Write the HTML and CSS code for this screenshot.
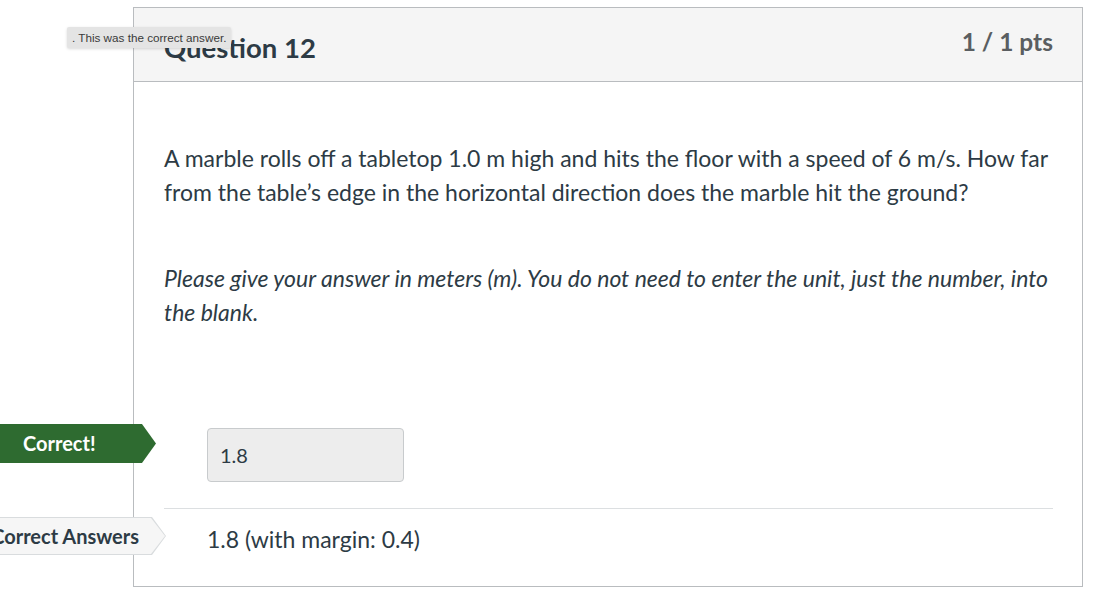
FILE: index.html
```html
<!DOCTYPE html>
<html>
<head>
<meta charset="utf-8">
<link rel="stylesheet" href="styles.css">
</head>
<body>
<div class="page">
  <div class="card">
    <div class="card-header">
      <h2 class="title">Question 12</h2>
      <span class="pts">1 / 1 pts</span>
    </div>
    <div class="card-body">
      <p class="text">A marble rolls off a tabletop 1.0 m high and hits the floor with a speed of 6 m/s. How far from the table’s edge in the horizontal direction does the marble hit the ground?</p>
      <p class="text note"><em>Please give your answer in meters (m). You do not need to enter the unit, just the number, into the blank.</em></p>
      <div class="answer-row answer-user">
        <span class="label label-correct">Correct!</span>
        <div class="answer-box">1.8</div>
      </div>
      <div class="answer-row answer-key">
        <span class="label label-key"><span class="label-text">Correct Answers</span></span>
        <div class="answer-text">1.8 (with margin: 0.4)</div>
      </div>
    </div>
  </div>
  <div class="tooltip">. This was the correct answer.</div>
</div>
</body>
</html>
```

FILE: styles.css
```css
html, body {
  margin: 0;
  padding: 0;
  background: #ffffff;
}

.page {
  position: relative;
  padding: 7px 10px 0 133px;
  font-family: Lato, "Open Sans", sans-serif;
  color: #2d3b45;
}

.card {
  border: 1px solid #b9bcbf;
  background: #ffffff;
}

.card-header {
  height: 73px;
  background: #f5f5f5;
  border-bottom: 1px solid #b9bcbf;
  display: flex;
  justify-content: space-between;
  align-items: flex-start;
  padding: 0 29px 0 30px;
}

.title {
  margin: 23px 0 0 0;
  font-size: 27.5px;
  font-weight: 700;
  line-height: 34px;
  color: #2d3b45;
}

.pts {
  margin-top: 17px;
  font-size: 24.5px;
  font-weight: 700;
  line-height: 34px;
  color: #5a5e61;
}

.card-body {
  padding: 59px 29px 30px 30px;
}

.text {
  margin: 0;
  font-size: 23px;
  line-height: 34px;
  color: #2d3b45;
}

.note {
  margin-top: 52px;
}

.answer-row {
  position: relative;
  display: flex;
  align-items: flex-start;
}

.answer-user {
  margin-top: 95px;
  padding: 4px 0 26px 43px;
  border-bottom: 1px solid #dcdfe1;
}

.answer-key {
  padding: 13px 0 0 43px;
  min-height: 34px;
}

.label {
  position: absolute;
  font-weight: 700;
  font-size: 20px;
  line-height: 39px;
  height: 39px;
  box-sizing: border-box;
}

.label-correct {
  top: 0;
  left: -164px;
  width: 156px;
  padding-left: 23px;
  color: #ffffff;
  background: #2e6b30;
  clip-path: polygon(0 0, 142px 0, 100% 50%, 142px 100%, 0 100%);
}

.label-key {
  top: 8px;
  left: -194px;
  width: 196px;
  height: 38px;
  line-height: 38px;
  text-align: right;
  padding-right: 27px;
  font-size: 20px;
  color: #2d3b45;
  background: #d9dcde;
  clip-path: polygon(0 0, calc(100% - 14px) 0, 100% 50%, calc(100% - 14px) 100%, 0 100%);
}

.label-key::before {
  content: "";
  position: absolute;
  top: 1px;
  left: 0;
  right: 1px;
  bottom: 1px;
  background: #f6f6f6;
  clip-path: polygon(0 0, calc(100% - 14px) 0, 100% 50%, calc(100% - 14px) 100%, 0 100%);
}

.label-text {
  position: relative;
}

.answer-box {
  width: 197px;
  height: 54px;
  box-sizing: border-box;
  background: #ededed;
  border: 1px solid #c8cbcd;
  border-radius: 4px;
  padding: 0 12px;
  font-size: 20px;
  line-height: 52px;
  color: #2d3b45;
}

.answer-text {
  font-size: 23px;
  line-height: 34px;
  color: #2d3b45;
}

.tooltip {
  position: absolute;
  left: 67px;
  top: 27px;
  height: 21px;
  box-sizing: border-box;
  padding: 0 5px;
  background: #e4e4e4;
  box-shadow: 0 1px 3px rgba(0, 0, 0, 0.15);
  border-radius: 2px;
  font-family: "Liberation Sans", Arial, sans-serif;
  font-size: 11.7px;
  line-height: 21px;
  color: #3a3a3a;
  white-space: nowrap;
}
```
